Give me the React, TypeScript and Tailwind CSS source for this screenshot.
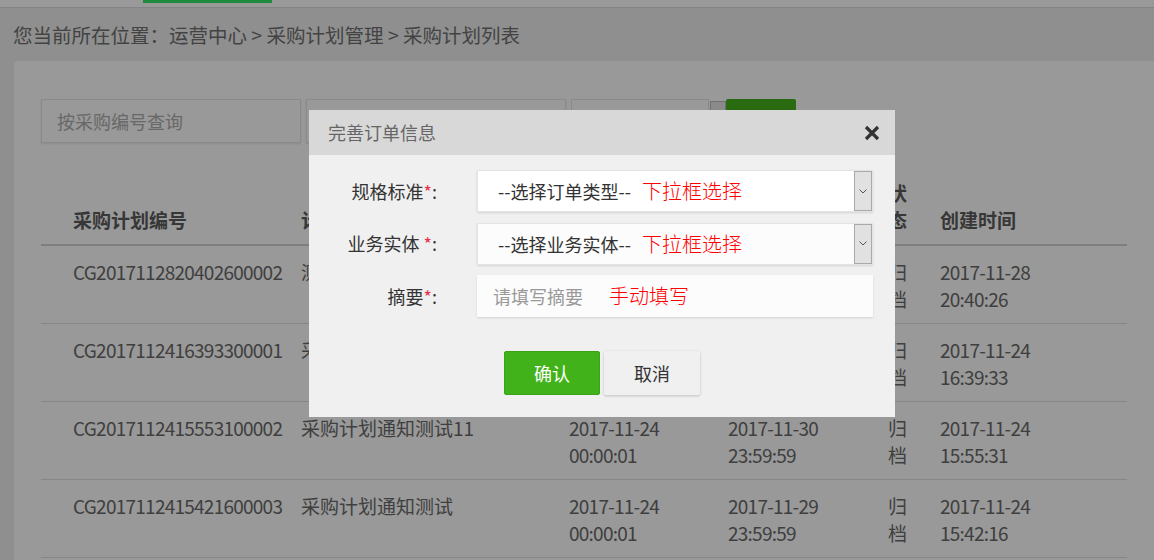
const FONT = "font-['Noto_Sans_CJK_SC','Noto_Sans',sans-serif]";

interface Plan {
  id: string;
  name: string;
  start: [string, string];
  end: [string, string];
  status: string;
  created: [string, string];
}

const PLANS: Plan[] = [
  {
    id: 'CG2017112820402600002',
    name: '测试采购计划通知',
    start: ['2017-11-28', '00:00:01'],
    end: ['2017-11-30', '23:59:59'],
    status: '归档',
    created: ['2017-11-28', '20:40:26'],
  },
  {
    id: 'CG2017112416393300001',
    name: '采购计划通知测试22',
    start: ['2017-11-24', '00:00:01'],
    end: ['2017-11-30', '23:59:59'],
    status: '归档',
    created: ['2017-11-24', '16:39:33'],
  },
  {
    id: 'CG2017112415553100002',
    name: '采购计划通知测试11',
    start: ['2017-11-24', '00:00:01'],
    end: ['2017-11-30', '23:59:59'],
    status: '归档',
    created: ['2017-11-24', '15:55:31'],
  },
  {
    id: 'CG2017112415421600003',
    name: '采购计划通知测试',
    start: ['2017-11-24', '00:00:01'],
    end: ['2017-11-29', '23:59:59'],
    status: '归档',
    created: ['2017-11-24', '15:42:16'],
  },
];

function Chevron() {
  return (
    <svg width="8" height="5" viewBox="0 0 8 5" fill="none">
      <path d="M0.5 0.5L4 4L7.5 0.5" stroke="#555" strokeWidth="1" />
    </svg>
  );
}

// numbers in the screenshot are set tighter than Noto's digits
const NUM = 'tracking-[-0.75px]';

function PlanTable() {
  return (
    <div>
      <div className="flex h-[103px] items-end border-b-2 border-[#d2d2d2] pb-[11px] pl-[32px] text-[19px] font-bold leading-[27px] text-[#5c5c5c]">
        <div className="w-[228px]">采购计划编号</div>
        <div className="w-[268px]">计划名称</div>
        <div className="w-[159px]">开始时间</div>
        <div className="w-[160px]">结束时间</div>
        <div className="w-[52px] pr-[30px]">状态</div>
        <div className="flex-1">创建时间</div>
      </div>
      {PLANS.map((p) => (
        <div
          key={p.id}
          className="flex h-[78px] border-b border-[#e0e0e0] pl-[32px] pt-[12px] text-[19px] leading-[27px] text-[#6a6a6a]"
        >
          <div className={`w-[228px] ${NUM}`}>{p.id}</div>
          <div className="w-[268px]">{p.name}</div>
          <div className={`w-[159px] ${NUM}`}>
            <div>{p.start[0]}</div>
            <div>{p.start[1]}</div>
          </div>
          <div className={`w-[160px] ${NUM}`}>
            <div>{p.end[0]}</div>
            <div>{p.end[1]}</div>
          </div>
          <div className="w-[52px] pr-[30px]">{p.status}</div>
          <div className={`flex-1 ${NUM}`}>
            <div>{p.created[0]}</div>
            <div>{p.created[1]}</div>
          </div>
        </div>
      ))}
    </div>
  );
}

function Field({
  label,
  spaced,
  children,
}: {
  label: string;
  spaced?: boolean;
  children: React.ReactNode;
}) {
  return (
    <div className="flex h-[42px] items-center">
      <div className="w-[129px] pr-[1px] text-right text-[18px] text-[#333]">
        {label}
        {spaced ? ' ' : ''}
        <span className="text-[#e8304a]">*</span>:
      </div>
      <div className="ml-[39px] h-full w-[396px]">{children}</div>
    </div>
  );
}

function SelectBox({ text, bg }: { text: string; bg: string }) {
  return (
    <div
      className={`flex h-full items-center border border-[#e4e4e4] shadow-[0_1px_2px_rgba(0,0,0,0.12)] ${bg}`}
    >
      <span className="pl-[20px] text-[18px] leading-[24px] text-[#333]">{text}</span>
      <span className="ml-[11px] text-[20px] font-light leading-[24px] text-[#ff0000]">下拉框选择</span>
      <div className="ml-auto flex h-full w-[18px] items-center justify-center border border-[#a9a9a9] bg-[#e1e1e1]">
        <Chevron />
      </div>
    </div>
  );
}

function OrderDialog() {
  return (
    <div className="absolute left-[309px] top-[110px] h-[307px] w-[586px] bg-[#f0f0f0]">
      <div className="flex h-[45px] items-center justify-between bg-[#d8d8d8] pl-[19px] pr-[15px]">
        <span className="text-[18px] text-[#666]">完善订单信息</span>
        <svg width="16" height="16" viewBox="0 0 16 16">
          <path d="M2 2L14 14M14 2L2 14" stroke="#333" strokeWidth="3.2" />
        </svg>
      </div>
      <div className="flex flex-col gap-[10.5px] pt-[15px]">
        <Field label="规格标准">
          <SelectBox text="--选择订单类型--" bg="bg-white" />
        </Field>
        <Field label="业务实体" spaced>
          <SelectBox text="--选择业务实体--" bg="bg-[#fcfcfc]" />
        </Field>
        <Field label="摘要">
          <div className="flex h-full items-center bg-[#fcfcfc] shadow-[0_1px_2px_rgba(0,0,0,0.12)]">
            <span className="pl-[16px] text-[18px] leading-[24px] text-[#999]">请填写摘要</span>
            <span className="ml-[26px] text-[20px] font-light leading-[24px] text-[#ff0000]">手动填写</span>
          </div>
        </Field>
      </div>
      <div className="mt-[34px] flex justify-center gap-[4px]">
        <button className="h-[44px] w-[96px] rounded-[2px] border border-[#3aa416] bg-[#42b21a] text-[18px] text-white">
          确认
        </button>
        <button className="h-[44px] w-[96px] rounded-[2px] bg-[#f0f0f0] text-[18px] text-[#333] shadow-[0_1px_3px_rgba(0,0,0,0.2)]">
          取消
        </button>
      </div>
    </div>
  );
}

export default function App() {
  return (
    <div className={`relative h-[560px] w-[1154px] overflow-hidden bg-[#eeeeee] ${FONT}`}>
      <div className="h-[8px] border-b border-[#dcdcdc] bg-white">
        <div className="ml-[143px] h-[3px] w-[129px] bg-[#33e667]" />
      </div>
      <div className="flex h-[53px] items-center pl-[13px] text-[19.5px] text-[#707070]">
        您当前所在位置：运营中心 &gt; 采购计划管理 &gt; 采购计划列表
      </div>
      <div className="ml-[14px] h-full rounded-tl-[4px] bg-white px-[27px] pt-[38px]">
        <div className="flex h-[44px] items-stretch gap-[5px]">
          <div className="flex w-[260px] items-center border border-[#e6e6e6] pl-[15px] text-[18px] text-[#adadad] shadow-[0_1px_2px_rgba(0,0,0,0.1)]">
            按采购编号查询
          </div>
          <div className="w-[260px] border border-[#e6e6e6] shadow-[0_1px_2px_rgba(0,0,0,0.1)]" />
          <div className="w-[138px] border border-[#e6e6e6]" />
          <div className="-ml-[4px] mt-[2px] w-[16px] border border-[#bdbdbd] bg-[#e6e6e6]" />
          <div className="-ml-[5px] w-[70px] rounded-[2px] bg-[#46b11b]" />
        </div>
        <PlanTable />
      </div>
      <div className="absolute inset-0 bg-black/40" />
      <OrderDialog />
    </div>
  );
}
